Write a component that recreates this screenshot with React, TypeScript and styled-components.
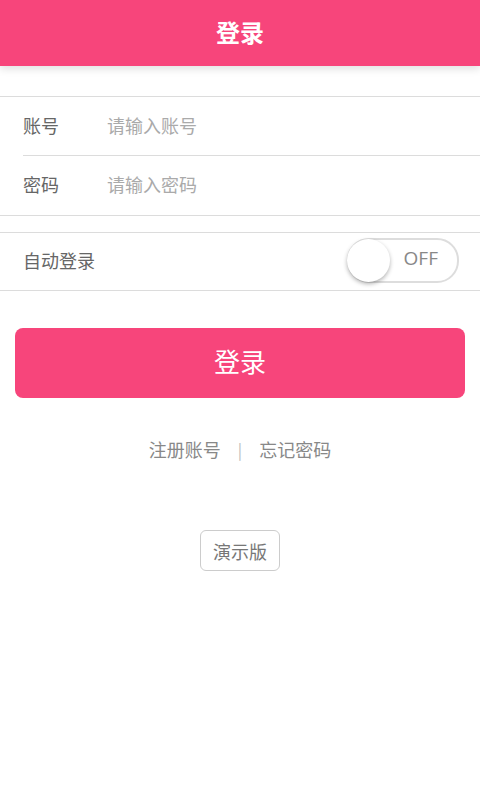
import React, { useState } from 'react'
import styled, { createGlobalStyle } from 'styled-components'

const GlobalStyle = createGlobalStyle`
  html, body {
    margin: 0;
    padding: 0;
    background: #fff;
    font-family: "Noto Sans CJK SC", "Noto Sans", sans-serif;
  }
`

const Page = styled.div`
  width: 480px;
  min-height: 800px;
  background: #fff;
`

const Header = styled.div`
  height: 66px;
  box-sizing: border-box;
  padding-bottom: 4px;
  background: #f7457b;
  color: #fff;
  display: flex;
  align-items: center;
  justify-content: center;
  font-size: 24px;
  font-weight: 700;
  box-shadow: 0 3px 8px rgba(0, 0, 0, 0.12);
  position: relative;
`

const Group = styled.div<{ $top: number }>`
  margin-top: ${p => p.$top}px;
  border-top: 1px solid #dcdcdc;
  border-bottom: 1px solid #dcdcdc;
`

const FieldRow = styled.div<{ $last?: boolean }>`
  height: 59px;
  box-sizing: border-box;
  margin-left: 23px;
  padding-bottom: 3px;
  display: flex;
  align-items: center;
  border-bottom: ${p => (p.$last ? 'none' : '1px solid #dcdcdc')};
`

const Label = styled.span`
  width: 84px;
  font-size: 18px;
  color: #666;
`

const Input = styled.input`
  flex: 1;
  border: none;
  outline: none;
  font-size: 18px;
  font-family: inherit;
  color: #333;
  padding: 0;
  background: transparent;
  &::placeholder {
    color: #aaa;
  }
`

const SwitchRow = styled.div`
  height: 57px;
  box-sizing: border-box;
  padding: 0 23px 3px;
  display: flex;
  align-items: center;
  justify-content: space-between;
`

const Toggle = styled.div`
  width: 108px;
  height: 41px;
  border: 2px solid #ddd;
  border-radius: 22px;
  position: relative;
  display: flex;
  align-items: center;
  justify-content: flex-end;
  margin-right: -2px;
  cursor: pointer;
`

const Knob = styled.div`
  position: absolute;
  left: -2px;
  top: -1px;
  width: 43px;
  height: 43px;
  border-radius: 50%;
  background: #fff;
  box-shadow: 0 2px 4px rgba(0, 0, 0, 0.3);
`

const ToggleText = styled.span`
  font-family: "Open Sans", "Noto Sans", sans-serif;
  font-size: 19px;
  color: #888;
  margin-right: 19px;
  margin-top: -5px;
`

const LoginButton = styled.button`
  display: block;
  margin: 37px 15px 0;
  width: 450px;
  height: 70px;
  padding: 0 0 6px;
  border: none;
  border-radius: 8px;
  background: #f7457b;
  color: #fff;
  font-size: 26px;
  font-family: inherit;
  cursor: pointer;
`

const Links = styled.div`
  margin-top: 38px;
  display: flex;
  justify-content: center;
  align-items: center;
  gap: 17px;
  font-size: 18px;
  color: #888;
`

const Sep = styled.span`
  color: #bbb;
  font-size: 16px;
`

const DemoWrap = styled.div`
  margin-top: 68px;
  display: flex;
  justify-content: center;
`

const DemoTag = styled.div`
  width: 78px;
  height: 39px;
  border: 1.5px solid #ccc;
  border-radius: 6px;
  display: flex;
  align-items: center;
  justify-content: center;
  font-size: 18px;
  color: #777;
`

export default function App() {
  const [auto, setAuto] = useState(false)
  return (
    <Page>
      <GlobalStyle />
      <Header>登录</Header>
      <Group $top={30}>
        <FieldRow>
          <Label>账号</Label>
          <Input placeholder="请输入账号" />
        </FieldRow>
        <FieldRow $last>
          <Label>密码</Label>
          <Input type="password" placeholder="请输入密码" />
        </FieldRow>
      </Group>
      <Group $top={16}>
        <SwitchRow>
          <Label>自动登录</Label>
          <Toggle onClick={() => setAuto(!auto)}>
            <Knob />
            <ToggleText>{auto ? 'ON' : 'OFF'}</ToggleText>
          </Toggle>
        </SwitchRow>
      </Group>
      <LoginButton>登录</LoginButton>
      <Links>
        <span>注册账号</span>
        <Sep>|</Sep>
        <span>忘记密码</span>
      </Links>
      <DemoWrap>
        <DemoTag>演示版</DemoTag>
      </DemoWrap>
    </Page>
  )
}
